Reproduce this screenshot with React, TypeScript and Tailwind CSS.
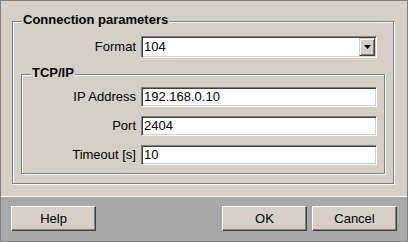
import React from "react";

const font = { fontFamily: '"Liberation Sans", Arial, sans-serif' };

function Group({ title, className, children }: { title: string; className?: string; children: React.ReactNode }) {
  return (
    <div
      className={
        "relative border border-[#808080] shadow-[1px_1px_0_#ffffff,inset_1px_1px_0_#ffffff] " + (className ?? "")
      }
    >
      <span className="absolute -top-[10px] left-[9px] px-[1px] bg-[#d4d0c8] text-[13px] leading-[16px] font-bold text-black">
        {title}
      </span>
      {children}
    </div>
  );
}

function Field({ value, h = "h-[20px]" }: { value: string; h?: string }) {
  return (
    <div
      className={
        "w-[236px] " +
        h +
        " bg-white border border-t-[#808080] border-l-[#808080] border-b-white border-r-white shadow-[inset_1px_1px_0_#404040,inset_-1px_-1px_0_#d4d0c8] flex items-center pl-[2px] text-[13px] text-black"
      }
    >
      {value}
    </div>
  );
}

function Row({ label, labelW, children }: { label: string; labelW: string; children: React.ReactNode }) {
  return (
    <div className="flex items-center">
      <div className={labelW + " text-right text-[13px] text-black pr-[5px]"}>{label}</div>
      {children}
    </div>
  );
}

function Btn({ children }: { children: React.ReactNode }) {
  return (
    <button className="w-[85px] h-[25px] bg-[#d4d0c8] border border-t-white border-l-white border-b-[#404040] border-r-[#404040] shadow-[inset_-1px_-1px_0_#808080] text-[13px] text-black flex items-center justify-center">
      {children}
    </button>
  );
}

export default function App() {
  return (
    <div
      style={font}
      className="w-[408px] h-[242px] bg-[#d4d0c8] border border-[#808080] flex flex-col overflow-hidden"
    >
      <div className="flex-1 pt-[20px] pl-[11px] pr-[13px]">
        <Group title="Connection parameters" className="pt-[14px] pl-[8px] pr-[8px] pb-[9px]">
          <Row label="Format" labelW="w-[120px]">
            <div className="w-[236px] h-[22px] bg-white border border-t-[#808080] border-l-[#808080] border-b-white border-r-white shadow-[inset_1px_1px_0_#404040,inset_-1px_-1px_0_#d4d0c8] flex items-center pl-[2px] pr-[1px] text-[13px] text-black">
              <span className="flex-1">104</span>
              <div className="w-[16px] h-[18px] bg-[#d4d0c8] border border-t-[#d4d0c8] border-l-[#d4d0c8] border-b-[#404040] border-r-[#404040] shadow-[inset_1px_1px_0_#ffffff,inset_-1px_-1px_0_#808080] flex items-center justify-center">
                <svg width="7" height="4" viewBox="0 0 7 4">
                  <path d="M0 0h7L3.5 4z" fill="#000" />
                </svg>
              </div>
            </div>
          </Row>
          <Group title="TCP/IP" className="mt-[16px] pt-[12px] pl-[0px] pr-[6px] pb-[8px] flex flex-col gap-[9px]">
            <Row label="IP Address" labelW="w-[119px]">
              <Field value="192.168.0.10" />
            </Row>
            <Row label="Port" labelW="w-[119px]">
              <Field value="2404" />
            </Row>
            <Row label="Timeout [s]" labelW="w-[119px]">
              <Field value="10" />
            </Row>
          </Group>
        </Group>
      </div>
      <div className="h-[1px] bg-white" />
      <div className="h-[44px] bg-[#a8a8a8] flex items-start pt-[9px] pl-[10px] pr-[10px] gap-[5px]">
        <Btn>Help</Btn>
        <div className="flex-1" />
        <Btn>OK</Btn>
        <Btn>Cancel</Btn>
      </div>
    </div>
  );
}
